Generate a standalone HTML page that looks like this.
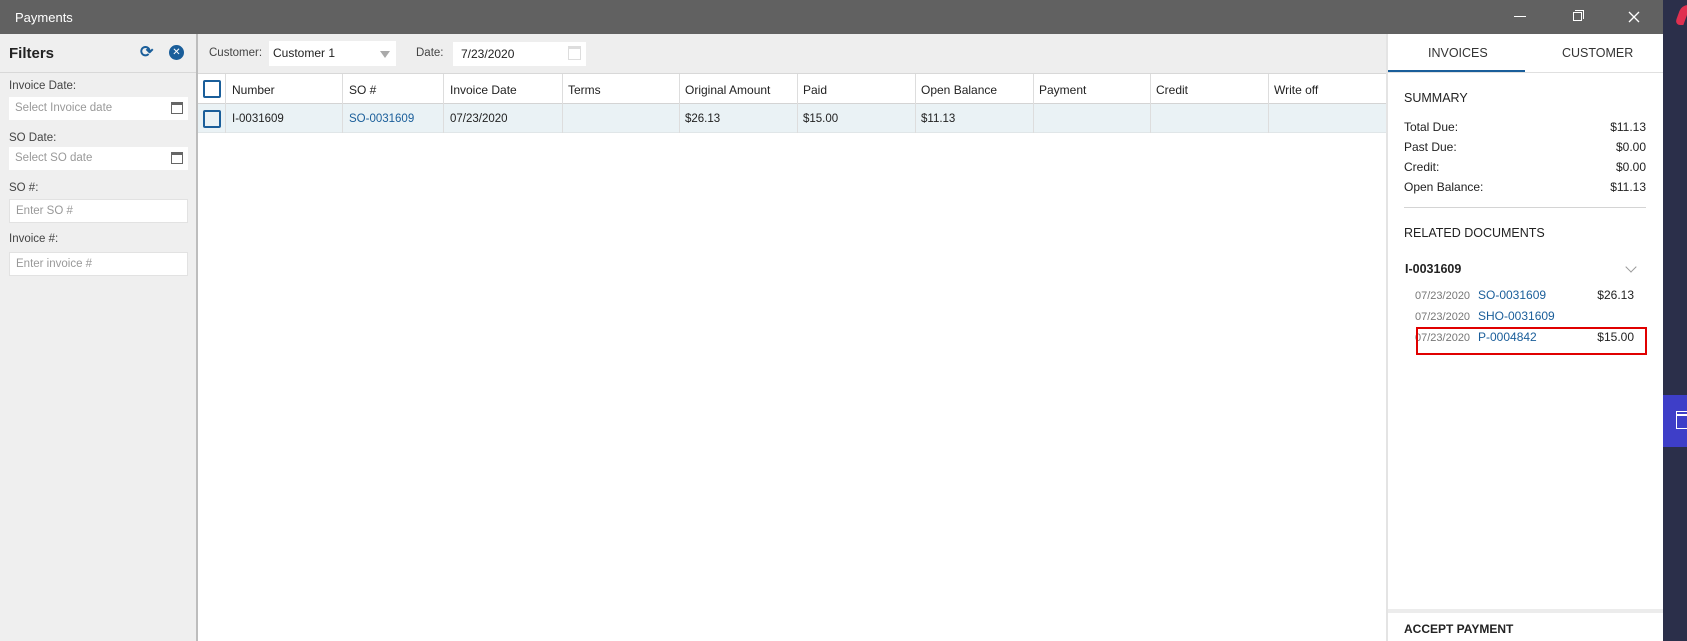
<!DOCTYPE html>
<html><head><meta charset="utf-8"><style>
*{margin:0;padding:0;box-sizing:border-box}
body{width:1687px;height:641px;overflow:hidden;position:relative;font-family:"Liberation Sans",sans-serif;font-size:12px;color:#222;background:#fff}
.a{position:absolute;white-space:nowrap}
.lbl{color:#444;font-size:11.5px}
.inp{position:absolute;background:#fff;border:1px solid #e2e2e2;color:#999;font-size:11.5px;padding-left:6px;line-height:23px}
.col{position:absolute;top:74px;height:59px;border-left:1px solid #ddd}
.link{color:#1a5e9a}
</style></head><body>
<div class="a" style="left:0;top:0;width:1663px;height:34px;background:#616161"></div>
<div class="a" style="left:15px;top:10px;color:#fff;font-size:13px">Payments</div>
<div class="a" style="left:1514px;top:16px;width:12px;height:1px;background:#fff"></div>
<div class="a" style="left:1573px;top:12px;width:9px;height:9px;border:1px solid #fff"></div>
<div class="a" style="left:1575px;top:10px;width:9px;height:9px;border-top:1px solid #fff;border-right:1px solid #fff"></div>
<svg class="a" style="left:1628px;top:11px" width="12" height="12"><path d="M1 1L11 11M11 1L1 11" stroke="#fff" stroke-width="1.3"/></svg>
<div class="a" style="left:1663px;top:0;width:24px;height:641px;background:#2b2f4a"></div>
<div class="a" style="left:1663px;top:395px;width:24px;height:52px;background:#3e3ec8"></div>
<div class="a" style="left:1676px;top:415px;width:11px;height:14px;border:1.5px solid #fff;border-right:none"></div>
<div class="a" style="left:1676px;top:411px;width:11px;height:4px;border:1.5px solid #fff;border-right:none"></div>
<div class="a" style="left:1678px;top:5px;width:9px;height:20px;background:#e03050;border-radius:6px 0 0 6px;transform:skewX(-20deg)"></div>
<div class="a" style="left:0;top:34px;width:198px;height:607px;background:#efefef;border-right:2px solid #bdbdbd"></div>
<div class="a" style="left:9px;top:45px;font-weight:bold;font-size:15px;color:#222">Filters</div>
<div class="a" style="left:140px;top:42px;color:#1a5e9a;font-size:16px;font-weight:bold">⟳</div>
<div class="a" style="left:169px;top:45px;width:15px;height:15px;border-radius:50%;background:#1a5e9a;color:#fff;font-size:10px;text-align:center;line-height:15px">✕</div>
<div class="a" style="left:0;top:72px;width:196px;height:1px;background:#d8d8d8"></div>
<div class="a lbl" style="left:9px;top:80px">Invoice Date:</div>
<div class="inp" style="left:9px;top:97px;width:179px;height:23px;border:none">Select Invoice date</div>
<div class="a" style="left:171px;top:102px;width:12px;height:12px;border:1.5px solid #666;border-top-width:3px"></div>
<div class="a lbl" style="left:9px;top:132px">SO Date:</div>
<div class="inp" style="left:9px;top:147px;width:179px;height:23px;border:none">Select SO date</div>
<div class="a" style="left:171px;top:152px;width:12px;height:12px;border:1.5px solid #666;border-top-width:3px"></div>
<div class="a lbl" style="left:9px;top:182px">SO #:</div>
<div class="inp" style="left:9px;top:199px;width:179px;height:24px">Enter SO #</div>
<div class="a lbl" style="left:9px;top:233px">Invoice #:</div>
<div class="inp" style="left:9px;top:252px;width:179px;height:24px">Enter invoice #</div>
<div class="a" style="left:198px;top:34px;width:1190px;height:40px;background:#eeeeee;border-bottom:1px solid #d8d8d8"></div>
<div class="a lbl" style="left:209px;top:47px">Customer:</div>
<div class="a" style="left:269px;top:41px;width:127px;height:25px;background:#fff;padding-left:4px;line-height:25px;font-size:12px">Customer 1</div>
<div class="a" style="left:380px;top:51px;border-left:5px solid transparent;border-right:5px solid transparent;border-top:7px solid #aaa"></div>
<div class="a lbl" style="left:416px;top:47px">Date:</div>
<div class="a" style="left:453px;top:42px;width:133px;height:24px;background:#fff;padding-left:8px;line-height:24px;font-size:12px">7/23/2020</div>
<div class="a" style="left:568px;top:46px;width:13px;height:14px;border:1.5px solid #ddd;border-top-width:3px"></div>
<div class="a" style="left:198px;top:74px;width:1190px;height:30px;border-bottom:1px solid #d4d4d4"></div>
<div class="a" style="left:198px;top:104px;width:1190px;height:29px;background:#eaf2f5;border-bottom:1px solid #e0e6e8"></div>
<div class="a" style="left:203px;top:80px;width:18px;height:18px;border:2px solid #1a5e9a;border-radius:2px;background:#fff"></div>
<div class="a" style="left:203px;top:110px;width:18px;height:18px;border:2px solid #1a5e9a;border-radius:2px"></div>
<div class="col" style="left:225px"></div><div class="col" style="left:342px"></div><div class="col" style="left:443px"></div><div class="col" style="left:562px"></div><div class="col" style="left:679px"></div><div class="col" style="left:797px"></div><div class="col" style="left:915px"></div><div class="col" style="left:1033px"></div><div class="col" style="left:1150px"></div><div class="col" style="left:1268px"></div>
<div class="a" style="left:232px;top:83px">Number</div>
<div class="a" style="left:349px;top:83px">SO #</div>
<div class="a" style="left:450px;top:83px">Invoice Date</div>
<div class="a" style="left:568px;top:83px">Terms</div>
<div class="a" style="left:685px;top:83px">Original Amount</div>
<div class="a" style="left:803px;top:83px">Paid</div>
<div class="a" style="left:921px;top:83px">Open Balance</div>
<div class="a" style="left:1039px;top:83px">Payment</div>
<div class="a" style="left:1156px;top:83px">Credit</div>
<div class="a" style="left:1274px;top:83px">Write off</div>
<div class="a" style="left:232px;top:113px;font-size:11.5px">I-0031609</div>
<div class="a link" style="left:349px;top:113px;font-size:11.5px">SO-0031609</div>
<div class="a" style="left:450px;top:113px;font-size:11.5px">07/23/2020</div>
<div class="a" style="left:685px;top:113px;font-size:11.5px">$26.13</div>
<div class="a" style="left:803px;top:113px;font-size:11.5px">$15.00</div>
<div class="a" style="left:921px;top:113px;font-size:11.5px">$11.13</div>
<div class="a" style="left:1386px;top:34px;width:2px;height:607px;background:#e4e4e4"></div>
<div class="a" style="left:1388px;top:72px;width:275px;height:1px;background:#e0e0e0"></div>
<div class="a" style="left:1388px;top:70px;width:137px;height:2px;background:#1a5e9a"></div>
<div class="a" style="left:1428px;top:46px;color:#333;font-size:12.5px">INVOICES</div>
<div class="a" style="left:1562px;top:46px;color:#333;font-size:12.5px">CUSTOMER</div>
<div class="a" style="left:1404px;top:91px;font-size:12.5px">SUMMARY</div>
<div class="a" style="left:1404px;top:120px">Total Due:</div><div class="a" style="right:41px;top:120px">$11.13</div>
<div class="a" style="left:1404px;top:140px">Past Due:</div><div class="a" style="right:41px;top:140px">$0.00</div>
<div class="a" style="left:1404px;top:160px">Credit:</div><div class="a" style="right:41px;top:160px">$0.00</div>
<div class="a" style="left:1404px;top:180px">Open Balance:</div><div class="a" style="right:41px;top:180px">$11.13</div>
<div class="a" style="left:1404px;top:207px;width:242px;height:1px;background:#d4d4d4"></div>
<div class="a" style="left:1404px;top:226px;font-size:12.5px">RELATED DOCUMENTS</div>
<div class="a" style="left:1405px;top:262px;font-weight:bold;font-size:12.5px">I-0031609</div>
<div class="a" style="left:1627px;top:263px;width:8px;height:8px;border-right:1.5px solid #999;border-bottom:1.5px solid #999;transform:rotate(45deg)"></div>
<div class="a" style="left:1415px;top:290px;color:#777;font-size:11px">07/23/2020</div><div class="a link" style="left:1478px;top:288px">SO-0031609</div><div class="a" style="right:53px;top:288px">$26.13</div>
<div class="a" style="left:1415px;top:311px;color:#777;font-size:11px">07/23/2020</div><div class="a link" style="left:1478px;top:309px">SHO-0031609</div>
<div class="a" style="left:1415px;top:332px;color:#777;font-size:11px">07/23/2020</div><div class="a link" style="left:1478px;top:330px">P-0004842</div><div class="a" style="right:53px;top:330px">$15.00</div>
<div class="a" style="left:1416px;top:327px;width:231px;height:28px;border:2px solid #e00000"></div>
<div class="a" style="left:1388px;top:609px;width:275px;height:4px;background:#ececec"></div>
<div class="a" style="left:1404px;top:622px;font-weight:bold;font-size:12px">ACCEPT PAYMENT</div>
</body></html>
